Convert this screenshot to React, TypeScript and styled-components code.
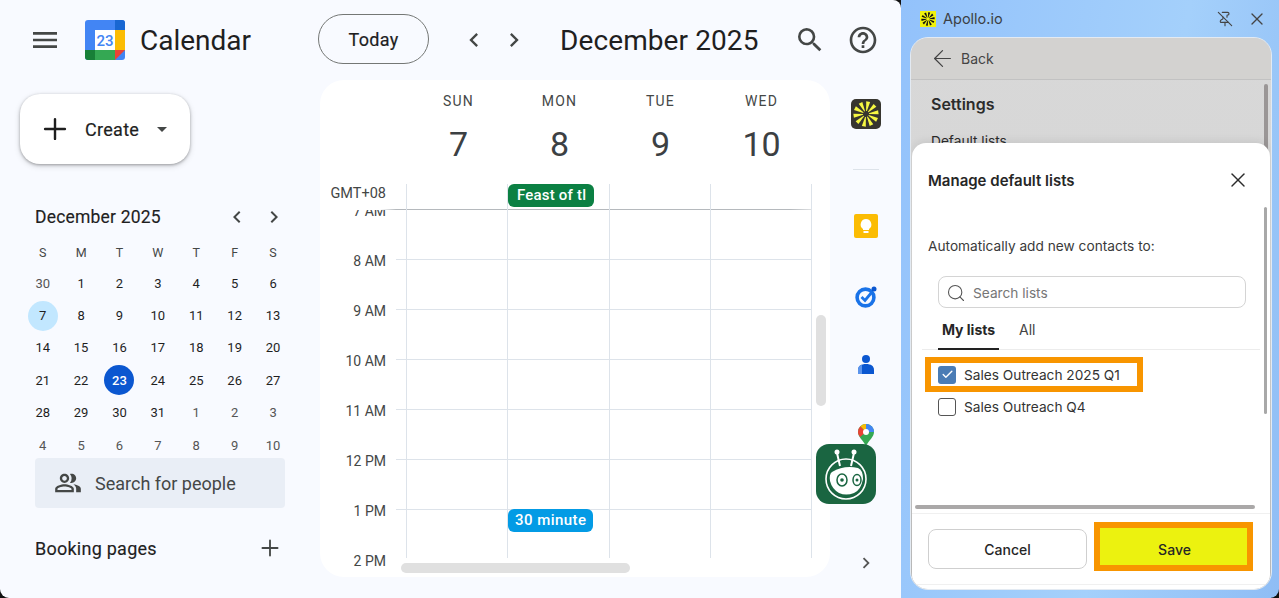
import React from "react";
import styled, { createGlobalStyle } from "styled-components";
import { ArrowLeft, PinOff, Plus, Search, X, Check } from "lucide-react";
import { MdMenu, MdSearch, MdHelpOutline, MdChevronLeft, MdChevronRight, MdOutlinePeopleAlt } from "react-icons/md";

const Global = createGlobalStyle`
  html, body { margin: 0; padding: 0; width: 1279px; height: 598px; overflow: hidden; background: #111; }
  * { box-sizing: border-box; }
  body { font-family: Roboto, "Liberation Sans", sans-serif; }
`;
const Page = styled.div`display: flex; width: 1279px; height: 598px; overflow: hidden; border-radius: 0 0 9px 9px;`;
const CalendarApp = styled.div`
  width: 901px; height: 598px; background: #f8faff; border-top-right-radius: 8px;
  display: grid; grid-template-columns: 320px 510px 71px; grid-template-rows: 80px 497px 21px;
`;
const Header = styled.header`grid-column: 1 / 4; grid-row: 1; display: flex; align-items: center; height: 80px; color: #444746;`;
const MenuButton = styled.div`margin-left: 29px; width: 32px; display: flex; color: #444746;`;
const Logo = styled.svg`margin-left: 24px; width: 40px; height: 40px; flex: none;`;
const Brand = styled.div`margin-left: 15px; width: 178px; font-size: 28px; color: #1f1f1f;`;
const TodayButton = styled.div`
  width: 111px; height: 50px; margin-top: -2px; border: 1px solid #747775; border-radius: 25px; display: flex; align-items: center;
  justify-content: center; font-size: 18px; color: #1f1f1f; letter-spacing: .3px; -webkit-text-stroke: .2px #1f1f1f;
`;
const HeaderNav = styled.div`display: flex; gap: 12px; margin-left: 31px; color: #444746;`;
const HeaderMonth = styled.div`margin-left: 32px; width: 234px; font-size: 28px; letter-spacing: .1px; color: #1f1f1f; white-space: nowrap;`;
const HeaderIcons = styled.div`display: flex; align-items: center; gap: 21px; color: #444746;`;

const Sidebar = styled.aside`grid-column: 1; grid-row: 2 / 4; display: flex; flex-direction: column; padding-top: 14px;`;
const CreateButton = styled.div`
  margin-left: 20px; width: 170px; height: 70px; background: #fff; border-radius: 20px;
  box-shadow: 0 1px 3px rgba(0,0,0,.3), 0 2px 6px rgba(0,0,0,.15); display: flex; align-items: center;
  padding-left: 18px; color: #1f1f1f;
`;
const CreateLabel = styled.span`margin-left: 13px; font-size: 18px; letter-spacing: .3px; -webkit-text-stroke: .2px #1f1f1f;`;
const Caret = styled.span`margin-left: 18px; width: 0; height: 0; border: 5px solid transparent; border-top-color: #444746; border-bottom: 0;`;
const MiniHead = styled.div`display: flex; align-items: center; height: 26px; margin: 40px 0 0 35px; color: #444746;`;
const MiniTitle = styled.div`width: 190px; font-size: 17.5px; color: #1f1f1f; letter-spacing: .2px; -webkit-text-stroke: .15px #1f1f1f;`;
const MiniNav = styled.div`display: flex; gap: 13px;`;
const MiniGrid = styled.div`
  display: grid; grid-template-columns: repeat(7, 38.4px); margin: 7px 0 1px 23.5px; height: 220px;
  grid-template-rows: 30px repeat(6, 32.4px); align-items: center; justify-items: center;
`;
const Wd = styled.div`font-size: 12.5px; color: #444746;`;
const DayCell = styled.div<{ $kind?: string }>`
  width: 30px; height: 30px; border-radius: 50%; display: flex; align-items: center; justify-content: center;
  font-size: 13px; font-weight: ${p => (p.$kind === "today" ? 500 : 400)};
  color: ${p => (p.$kind === "today" ? "#fff" : p.$kind === "other" ? "#555" : "#1f1f1f")};
  background: ${p => (p.$kind === "today" ? "#0b57d0" : p.$kind === "selected" ? "#c2e7ff" : "transparent")};
`;
const PeopleSearch = styled.div`
  margin: 0 0 0 35px; width: 250px; height: 50px; background: #e9eef6; border-radius: 4px; position: relative;
  display: flex; align-items: center; padding-left: 19px; color: #444746; font-size: 18px;
`;
const PeopleLabel = styled.span`margin-left: 13px;`;
const BookingRow = styled.div`margin: 27px 0 0 35px; width: 248px; display: flex; justify-content: space-between; align-items: center; font-size: 18px; color: #1f1f1f; letter-spacing: .25px; -webkit-text-stroke: .15px #1f1f1f;`;

const Card = styled.main`grid-column: 2; grid-row: 2; background: #fff; border-radius: 24px; position: relative; overflow: hidden; display: flex; flex-direction: column;`;
const DayHead = styled.div`display: grid; grid-template-columns: 88px repeat(4, 101px); height: 104px; padding-top: 13px;`;
const DayCol = styled.div`display: flex; flex-direction: column; align-items: center;`;
const DayName = styled.div`font-size: 14px; color: #444746; letter-spacing: 1.2px;`;
const DayNum = styled.div`font-size: 34px; color: #3c4043; margin-top: 14px; line-height: 42px;`;
const AllDay = styled.div`
  display: grid; grid-template-columns: 86px 102px 102px 101px 101px; height: 26px; width: 492px;
  background: linear-gradient(to right, transparent 60px, #b5b9bd 76px, #b5b9bd 470px, #dfe1e3 100%) bottom / 100% 1px no-repeat;
`;
const Gmt = styled.div`font-size: 14.5px; color: #444746; text-align: right; padding: 1px 20px 0 0; white-space: nowrap;`;
const AllDayCell = styled.div`border-right: 1px solid #dde3ea; position: relative; &:nth-child(2){border-left:1px solid #dde3ea;}`;
const Hours = styled.div`flex: 1; overflow: hidden; position: relative;`;
const HourRow = styled.div`display: grid; grid-template-columns: 86px 102px 102px 101px 101px; height: 50px; width: 492px;`;
const HourLabel = styled.div`font-size: 14px; color: #444746; text-align: right; padding-right: 20px; margin-top: -7px; height: 20px; white-space: nowrap;`;
const HourCell = styled.div<{ $first?: boolean; $end?: boolean }>`
  border-right: 1px solid #dde3ea; position: relative;
  ${p => (p.$end ? "margin-bottom: 2px;" : "border-bottom: 1px solid #dde3ea;")}
  ${p => p.$first && !p.$end && "border-left: 1px solid #dde3ea; &::before{content:'';position:absolute;left:-11px;bottom:-1px;width:11px;height:1px;background:#dde3ea;}"}
  ${p => p.$first && p.$end && "border-left: 1px solid #dde3ea;"}
`;
const EventChip = styled.div<{ $color: string; $w: number; $pad: number; $below?: boolean }>`
  position: absolute; height: 23px; left: 0; width: ${p => p.$w}px; background: ${p => p.$color}; color: #fff; border-radius: 6px;
  font-size: 15px; font-weight: 500; padding: 0 0 0 ${p => p.$pad}px; line-height: 23px; overflow: hidden; white-space: nowrap; z-index: 2;
  letter-spacing: ${p => (p.$below ? ".45px" : ".2px")};
  ${p => p.$below && "bottom: -23px;"}
`;
const HScroll = styled.div`position: absolute; left: 81px; bottom: 4px; width: 229px; height: 10px; border-radius: 5px; background: #e0e0e0;`;
const VScroll = styled.div`position: absolute; left: 496px; top: 235px; width: 10px; height: 91px; border-radius: 5px; background: #e0e0e0;`;

const Rail = styled.nav`grid-column: 3; grid-row: 2 / 4; position: relative; display: flex; flex-direction: column; align-items: center; padding-top: 19px;`;
const RailDivider = styled.div`width: 26px; height: 1px; background: #dde3ea; margin: 40px 0 0 1px;`;
const RailIcon = styled.svg<{ $mt: number }>`margin-top: ${p => p.$mt}px; flex: none; display: block;`;
const ApolloTile = styled.svg`width: 30px; height: 30px; flex: none; color: #f6f742;`;
const ApolloMark = styled.svg`width: 16px; height: 16px; flex: none; color: #111;`;
const RailArrow = styled.div`position: absolute; top: 472px; left: 25px; color: #555; display: flex;`;
const Bot = styled.svg`position: absolute; left: -14px; top: 364px; width: 60px; height: 60px; z-index: 5;`;

const Panel = styled.section`
  flex: 1; min-width: 0; background: linear-gradient(100deg, #93c2fb 0%, #a4d0fb 60%, #8fbdf5 100%);
  display: flex; flex-direction: column; padding: 0 7px 8px 9px;
`;
const PanelBar = styled.div`height: 37px; display: flex; align-items: center; padding-left: 10px; color: #3c4043;`;
const PanelTitle = styled.div`flex: 1; font-family: Inter, sans-serif; font-size: 14.5px; color: #3c3f44; margin-left: 7px;`;
const BarIcons = styled.div`display: flex; gap: 14px; align-items: center; padding-right: 5px; color: #444;`;
const Shell = styled.div`
  flex: 1; position: relative; border-radius: 18px; overflow: hidden; background: linear-gradient(#d8d8d8, #d6d6d6 45%, #bdbdbd);
  border: 1px solid #e3eaf2; font-family: Inter, sans-serif;
`;
const BackRow = styled.div`height: 42px; background: #d3d2d0; border-bottom: 1px solid #c2c2c2; display: flex; align-items: center; padding-left: 18px; gap: 5px; color: #444; font-size: 14px;`;
const SettingsTitle = styled.div`margin: 14px 0 0 20px; font-size: 16px; font-weight: 600; color: #2b2b2b;`;
const SettingsSub = styled.div`margin: 19px 0 0 20px; font-size: 13.7px; color: #2b2b2b;`;
const ShellScroll = styled.div`position: absolute; right: 3px; top: 46px; width: 4px; height: 70px; border-radius: 2px; background: #9a9696;`;
const Sheet = styled.div`
  position: absolute; left: 1px; right: 1px; top: 105px; bottom: 0; background: #fff; border-radius: 14px;
  display: flex; flex-direction: column; box-shadow: 0 -2px 8px rgba(0,0,0,.08);
`;
const SheetHead = styled.div`display: flex; justify-content: space-between; align-items: center; padding: 25px 20px 0 16px; color: #2b2b2b; height: 49px;`;
const SheetTitle = styled.div`font-size: 15px; font-weight: 600; color: #262626;`;
const SheetBody = styled.div`flex: 1; position: relative; min-height: 0;`;
const Intro = styled.div`margin: 46px 0 0 16px; font-size: 13.7px; color: #3a3a3a;`;
const ListsBox = styled.div`margin: 22px 0 0 10px; position: relative;`;
const SearchBox = styled.div`
  margin-left: 16px; width: 308px; height: 32px; border: 1px solid #d4d4d4; border-radius: 8px; display: flex; align-items: center;
  padding: 1px 0 0 7px; gap: 7px; font-size: 13.7px; color: #767676;
`;
const Tabs = styled.div`display: flex; height: 40px; margin-top: 2px; width: 338px; border-bottom: 1px solid #ececec; padding-left: 16px; font-size: 14px;`;
const Tab = styled.div<{ $active?: boolean }>`
  ${p => p.$active && "width: 61px;"} margin-bottom: -1px; display: flex; align-items: center; justify-content: center;
  font-weight: ${p => (p.$active ? 700 : 400)}; color: ${p => (p.$active ? "#262626" : "#444")};
  margin-left: ${p => (p.$active ? 0 : 20)}px; border-bottom: 2px solid ${p => (p.$active ? "#222" : "transparent")};
`;
const ListRow = styled.div<{ $hl?: boolean }>`
  display: flex; align-items: center; gap: 8px; font-size: 13.7px; color: #333; width: ${p => (p.$hl ? "218px" : "auto")}; height: 35px;
  margin: ${p => (p.$hl ? "7px 0 0 3px" : "-3px 0 0 3px")}; padding-left: 13px;
  ${p => p.$hl && "outline: 6px solid #f89500; outline-offset: -6px;"}
`;
const Box = styled.div<{ $on?: boolean }>`
  width: 18px; height: 18px; border-radius: 3px; display: flex; align-items: center; justify-content: center; color: #fff;
  border: ${p => (p.$on ? "none" : "1px solid #555")}; background: ${p => (p.$on ? "#4a7cb5" : "#fff")};
`;
const SheetVScroll = styled.div`position: absolute; right: 3px; top: 15px; width: 3px; height: 207px; border-radius: 2px; background: #a8a8a8;`;
const SheetHScroll = styled.div`position: absolute; left: 3px; right: 15px; top: 313px; height: 4px; border-radius: 2px; background: #aaa8a8;`;
const Footer = styled.div`height: 72px; margin-bottom: 4px; border-top: 1px solid #f0f0f0; border-bottom: 1px solid #f0f0f0; display: flex; align-items: center; padding: 0 17px 0 16px; justify-content: space-between; font-size: 14px;`;
const CancelButton = styled.div`width: 159px; height: 40px; border: 1px solid #cfcfcf; border-radius: 8px; display: flex; align-items: center; justify-content: center; color: #262626; font-weight: 500;`;
const SaveButton = styled.div`width: 159px; height: 49px; margin-top: -5px; padding: 5px 0 0 2px; background: #ecf20f; border: 6px solid #f89500; display: flex; align-items: center; justify-content: center; color: #262626; font-weight: 500;`;

const days = ["S", "M", "T", "W", "T", "F", "S"];
const cells: [number, string?][] = [
  [30, "other"], [1], [2], [3], [4], [5], [6],
  [7, "selected"], [8], [9], [10], [11], [12], [13],
  [14], [15], [16], [17], [18], [19], [20],
  [21], [22], [23, "today"], [24], [25], [26], [27],
  [28], [29], [30], [31], [1, "other"], [2, "other"], [3, "other"],
  [4, "other"], [5, "other"], [6, "other"], [7, "other"], [8, "other"], [9, "other"], [10, "other"],
];
const heads: [string, number][] = [["SUN", 7], ["MON", 8], ["TUE", 9], ["WED", 10]];
const hours = ["7 AM", "8 AM", "9 AM", "10 AM", "11 AM", "12 PM", "1 PM"];

const CalendarLogo = () => (
  <Logo viewBox="0 0 40 40">
    <rect x="0" y="0" width="40" height="40" rx="3" fill="#4285f4" />
    <path d="M30 0h7a3 3 0 0 1 3 3v7H30z" fill="#1967d2" />
    <path d="M30 10h10v20H30z" fill="#fbbc04" />
    <path d="M10 30h20v10H10z" fill="#34a853" />
    <path d="M0 30h10v10H3a3 3 0 0 1-3-3z" fill="#188038" />
    <path d="M30 30h10L30 40z" fill="#ea4335" />
    <rect x="10" y="10" width="20" height="20" fill="#fff" />
    <text x="20" y="26" textAnchor="middle" fontFamily="Roboto, sans-serif" fontSize="15" fontWeight="500" fill="#4285f4">23</text>
  </Logo>
);

const Spark = () => (
  <g fill="currentColor">
    {[0, 36, 72, 108, 144, 180, 216, 252, 288, 324].map(a => (
      <path key={a} d="M14.600 12 L13 2.500 L17 2.500 L15.400 12 Z" transform={`rotate(${a + 10} 15 15)`} />
    ))}
  </g>
);

export default function App() {
  return (
    <Page>
      <Global />
      <CalendarApp>
        <Header>
          <MenuButton><MdMenu size={32} /></MenuButton>
          <CalendarLogo />
          <Brand>Calendar</Brand>
          <TodayButton>Today</TodayButton>
          <HeaderNav><MdChevronLeft size={28} /><MdChevronRight size={28} /></HeaderNav>
          <HeaderMonth>December 2025</HeaderMonth>
          <HeaderIcons><MdSearch size={32} /><MdHelpOutline size={32} /></HeaderIcons>
        </Header>
        <Sidebar>
          <CreateButton>
            <Plus size={34} strokeWidth={1.7} />
            <CreateLabel>Create</CreateLabel>
            <Caret />
          </CreateButton>
          <MiniHead>
            <MiniTitle>December 2025</MiniTitle>
            <MiniNav><MdChevronLeft size={24} /><MdChevronRight size={24} /></MiniNav>
          </MiniHead>
          <MiniGrid>
            {days.map((d, i) => <Wd key={i}>{d}</Wd>)}
            {cells.map(([n, k], i) => <DayCell key={i} $kind={k}>{n}</DayCell>)}
          </MiniGrid>
          <PeopleSearch><MdOutlinePeopleAlt size={28} /><PeopleLabel>Search for people</PeopleLabel></PeopleSearch>
          <BookingRow>Booking pages<Plus size={26} strokeWidth={1.7} color="#444746" /></BookingRow>
        </Sidebar>
        <Card>
          <DayHead>
            <div />
            {heads.map(([n, d]) => <DayCol key={n}><DayName>{n}</DayName><DayNum>{d}</DayNum></DayCol>)}
          </DayHead>
          <AllDay>
            <Gmt>GMT+08</Gmt>
            <AllDayCell />
            <AllDayCell><EventChip $color="#0b8043" $w={86} $pad={9}>Feast of tl</EventChip></AllDayCell>
            <AllDayCell />
            <AllDayCell />
          </AllDay>
          <Hours>
            {hours.map(h => (
              <HourRow key={h}>
                <HourLabel>{h}</HourLabel>
                {[0, 1, 2, 3].map(c => (
                  <HourCell key={c} $first={c === 0} $end={h === "1 PM"}>
                    {h === "12 PM" && c === 1 && <EventChip $below $color="#039be5" $w={85} $pad={7}>30 minute</EventChip>}
                  </HourCell>
                ))}
              </HourRow>
            ))}
            <HourRow><HourLabel>2 PM</HourLabel></HourRow>
          </Hours>
          <HScroll />
          <VScroll />
        </Card>
        <Rail>
          <ApolloTile viewBox="0 0 30 30">
            <rect width="30" height="30" rx="5" fill="#37352f" />
            <Spark />
          </ApolloTile>
          <RailDivider />
          <RailIcon $mt={44} width="24" height="24" viewBox="0 0 24 24">
            <rect width="24" height="24" rx="2" fill="#fbbc04" />
            <path d="M12 5a5.500 5.500 0 0 0-3 10v1h6v-1a5.500 5.500 0 0 0-3-10z" fill="#fff" />
            <rect x="9.500" y="17" width="5" height="2" fill="#fff" />
          </RailIcon>
          <RailIcon $mt={46} width="24" height="24" viewBox="0 0 24 24">
            <circle cx="11.500" cy="13.500" r="8.400" fill="none" stroke="#1a73e8" strokeWidth="3.600" />
            <path d="M7.500 13l3.500 3.500 7-8.500" fill="none" stroke="#1a73e8" strokeWidth="2.800" />
            <circle cx="20" cy="5" r="2.500" fill="#0b57d0" />
          </RailIcon>
          <RailIcon $mt={45} width="20" height="24" viewBox="0 0 20 24">
            <circle cx="10" cy="6" r="4" fill="#0b57d0" />
            <path d="M2 21v-4c0-4 3-6 8-6s8 2 8 6v4z" fill="#0b57d0" />
            <path d="M2 16c0-2 2-4 4-4v9H2z" fill="#5b94ec" />
          </RailIcon>
          <RailIcon $mt={47} width="18" height="22" viewBox="0 0 18 22">
            <path d="M9 0a8 8 0 0 1 8 8c0 5-5 8-8 14C6 16 1 13 1 8a8 8 0 0 1 8-8z" fill="#34a853" />
            <path d="M1 8a8 8 0 0 1 2.400-5.700L9 8 3 13C2 11.500 1 10 1 8z" fill="#ea4335" />
            <path d="M3.400 2.300A8 8 0 0 1 9 0l3 3-3 5z" fill="#fbbc04" />
            <path d="M9 0a8 8 0 0 1 8 8l-8 0z" fill="#4285f4" />
            <circle cx="9" cy="8" r="3" fill="#fff" />
          </RailIcon>
          <Bot viewBox="0 0 60 60">
            <rect width="60" height="60" rx="13" fill="#1a6541" />
            <circle cx="30" cy="35" r="20" fill="none" stroke="#fff" strokeWidth="1.600" />
            <path d="M21 9l3 13M38 9l-3 13" stroke="#fff" strokeWidth="2" />
            <circle cx="21" cy="8" r="2.500" fill="#fff" />
            <circle cx="38" cy="8" r="2.500" fill="#fff" />
            <path d="M16 28q12-7 26-4 5 2 5 11-2 11-9 14-8 3-15 0-7-4-9-12-1-7 2-9z" fill="#fff" />
            <ellipse cx="26" cy="36" rx="5" ry="6" fill="none" stroke="#1a6541" strokeWidth="1.500" />
            <circle cx="26" cy="36" r="1.800" fill="#1a6541" />
            <ellipse cx="41" cy="36" rx="4" ry="5.500" fill="none" stroke="#1a6541" strokeWidth="1.500" />
            <circle cx="41" cy="36" r="1.500" fill="#1a6541" />
          </Bot>
          <RailArrow><MdChevronRight size={22} /></RailArrow>
        </Rail>
      </CalendarApp>
      <Panel>
        <PanelBar>
          <ApolloMark viewBox="0 0 30 30">
            <rect width="30" height="30" fill="#f0f20c" />
            <Spark />
          </ApolloMark>
          <PanelTitle>Apollo.io</PanelTitle>
          <BarIcons><PinOff size={16} strokeWidth={1.7} /><X size={20} strokeWidth={1.6} /></BarIcons>
        </PanelBar>
        <Shell>
          <BackRow><ArrowLeft size={27} strokeWidth={1.1} />Back</BackRow>
          <SettingsTitle>Settings</SettingsTitle>
          <SettingsSub>Default lists</SettingsSub>
          <ShellScroll />
          <Sheet>
            <SheetHead><SheetTitle>Manage default lists</SheetTitle><X size={24} strokeWidth={1.4} /></SheetHead>
            <SheetBody>
              <Intro>Automatically add new contacts to:</Intro>
              <ListsBox>
                <SearchBox><Search size={20} strokeWidth={1.3} color="#555" />Search lists</SearchBox>
                <Tabs><Tab $active>My lists</Tab><Tab>All</Tab></Tabs>
                <ListRow $hl><Box $on><Check size={13} strokeWidth={2.6} /></Box>Sales Outreach 2025 Q1</ListRow>
                <ListRow><Box />Sales Outreach Q4</ListRow>
              </ListsBox>
              <SheetVScroll />
              <SheetHScroll />
            </SheetBody>
            <Footer>
              <CancelButton>Cancel</CancelButton>
              <SaveButton>Save</SaveButton>
            </Footer>
          </Sheet>
        </Shell>
      </Panel>
    </Page>
  );
}
